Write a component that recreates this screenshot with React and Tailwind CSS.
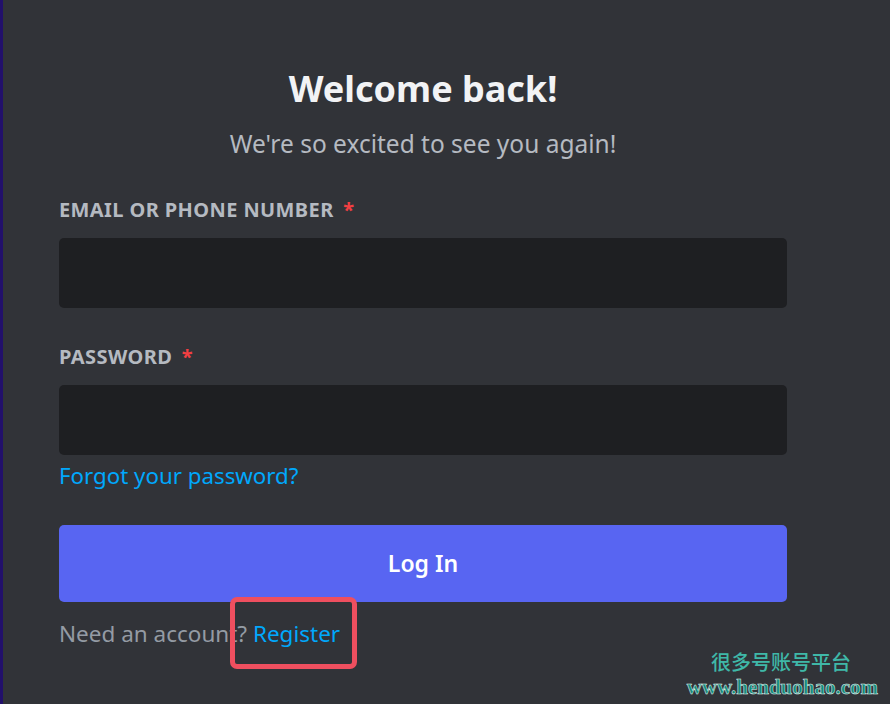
export default function App() {
  const font = { fontFamily: '"Noto Sans", "Open Sans", sans-serif' };

  return (
    <div className="relative h-[704px] w-[890px] overflow-hidden bg-[#313338] border-l-[3px] border-[#22106b]" style={font}>
      <div className="ml-[56px] w-[728px]">
        <h1 className="mt-[67px] text-center text-[36px] font-bold leading-[44px] text-[#f2f3f5]">Welcome back!</h1>
        <p className="mt-[17px] text-center text-[24.5px] leading-[32px] text-[#b5bac1]">We're so excited to see you again!</p>

        <label className="mt-[39px] block text-[20px] font-bold leading-[22px] tracking-[0.02em] text-[#b5bac1]">
          EMAIL OR PHONE NUMBER <span className="ml-1 text-[#f23f42]">*</span>
        </label>
        <div className="mt-[17px] h-[70px] rounded-[5px] bg-[#1e1f22]" />

        <label className="mt-[38px] block text-[20px] font-bold leading-[22px] tracking-[0.02em] text-[#b5bac1]">
          PASSWORD <span className="ml-1 text-[#f23f42]">*</span>
        </label>
        <div className="mt-[17px] h-[70px] rounded-[5px] bg-[#1e1f22]" />

        <a className="mt-[6px] block w-fit text-[22.3px] leading-[30px] text-[#00a8fc]">Forgot your password?</a>

        <button className="mt-[34px] flex h-[77px] w-full items-center justify-center rounded-[5px] bg-[#5865f2] text-[23px] font-semibold text-white">
          Log In
        </button>

        <p className="mt-[17px] text-[22.5px] leading-[30px] text-[#949ba4]">
          Need an account?{' '}
          <span className="relative text-[#00a8fc]">
            Register
            <span className="absolute -left-[23px] -right-[17px] -top-[21px] -bottom-[20px] rounded-[7px] border-[5px] border-[#ef4f5f]" />
          </span>
        </p>
      </div>

      <div className="absolute bottom-[4px] right-[12px] flex flex-col items-end">
        <span className="mr-[27px] text-[20px] font-medium leading-[24px] text-[#3fb8a8]" style={{ fontFamily: '"Noto Sans CJK SC", sans-serif' }}>很多号账号平台</span>
        <span className="text-[21px] font-bold leading-[26px] text-[#138a7c]" style={{ fontFamily: '"Liberation Serif", serif', WebkitTextStroke: '0.5px #e0f5f0' }}>www.henduohao.com</span>
      </div>
    </div>
  );
}
